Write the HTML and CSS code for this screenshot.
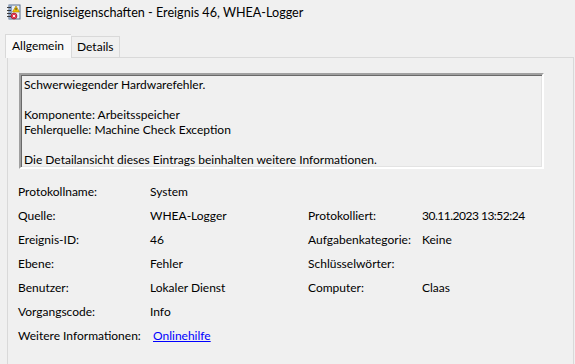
FILE: index.html
```html
<!DOCTYPE html>
<html lang="de">
<head>
  <meta charset="UTF-8" />
  <title>Ereigniseigenschaften</title>
  <link rel="stylesheet" href="styles.css">
</head>
<body>
  <div id="window">
    <div class="titlebar">
      <svg class="app-icon" width="16" height="16" viewBox="0 0 16 16">
        <rect x="3" y="1" width="11" height="14" fill="#e8eef6" stroke="#5a6f8c" />
        <rect x="3" y="1" width="3" height="14" fill="#8aa2c4" />
        <g stroke="#3b3b3b" stroke-width="1">
          <line x1="1" y1="3.5" x2="5" y2="3.5" />
          <line x1="1" y1="6.5" x2="5" y2="6.5" />
          <line x1="1" y1="9.5" x2="5" y2="9.5" />
          <line x1="1" y1="12.5" x2="5" y2="12.5" />
        </g>
        <path d="M10 2 L13.5 8 L6.5 8 Z" fill="#f5c400" stroke="#a07b00" stroke-width="0.6" />
        <rect x="9.6" y="4" width="0.9" height="2.2" fill="#333" />
        <circle cx="8" cy="12" r="3" fill="#e0304a" stroke="#9a1020" stroke-width="0.6" />
        <path d="M6.8 10.8 L9.2 13.2 M9.2 10.8 L6.8 13.2" stroke="#fff" stroke-width="0.9" />
      </svg>
      <span class="title">Ereigniseigenschaften - Ereignis 46, WHEA-Logger</span>
    </div>

    <div class="tabs">
      <div class="tab active">Allgemein</div>
      <div class="tab">Details</div>
    </div>

    <div class="panel">
      <div class="description">
        <div>Schwerwiegender Hardwarefehler.</div>
        <div>&nbsp;</div>
        <div>Komponente: Arbeitsspeicher</div>
        <div>Fehlerquelle: Machine Check Exception</div>
        <div>&nbsp;</div>
        <div>Die Detailansicht dieses Eintrags beinhalten weitere Informationen.</div>
      </div>

      <div class="fields">
        <div>Protokollname:</div><div>System</div><div></div><div></div>
        <div>Quelle:</div><div>WHEA-Logger</div><div>Protokolliert:</div><div class="num">30.11.2023 13:52:24</div>
        <div>Ereignis-ID:</div><div>46</div><div>Aufgabenkategorie:</div><div>Keine</div>
        <div>Ebene:</div><div>Fehler</div><div>Schlüsselwörter:</div><div></div>
        <div>Benutzer:</div><div>Lokaler Dienst</div><div>Computer:</div><div>Claas</div>
        <div>Vorgangscode:</div><div>Info</div><div></div><div></div>
        <div>Weitere Informationen:</div><div><a class="link" href="#">Onlinehilfe</a></div><div></div><div></div>
      </div>
    </div>
  </div>
</body>
</html>
```

FILE: styles.css
```css
html, body {
  margin: 0;
  padding: 0;
  height: 100%;
  background: #f0f0f0;
  color: #000;
  font-family: 'Lato', 'Segoe UI', sans-serif;
  font-size: 12px;
  overflow: hidden;
}

#window {
  display: flex;
  flex-direction: column;
  height: 100vh;
}

.titlebar {
  display: flex;
  align-items: center;
  height: 24px;
  padding-left: 6px;
  flex-shrink: 0;
}

.app-icon {
  flex-shrink: 0;
  margin-right: 3px;
}

.title {
  font-size: 12.6px;
}

.tabs {
  display: flex;
  align-items: flex-end;
  height: 33px;
  padding-left: 5px;
  box-sizing: border-box;
  flex-shrink: 0;
}

.tab {
  border: 1px solid #d9d9d9;
  border-bottom: none;
  background: #f0f0f0;
  padding: 0 5px 0 5px;
  height: 20px;
  line-height: 20px;
}

.tab.active {
  background: #f9f9f9;
  height: 23px;
  line-height: 21px;
  padding: 0 7px 0 6px;
  margin-bottom: -1px;
  position: relative;
  z-index: 1;
  border-right: none;
}

.panel {
  flex: 1;
  margin-left: 7px;
  margin-right: 1px;
  border: 1px solid #d9d9d9;
  border-bottom: none;
  padding: 15px 0 0 10px;
}

.description {
  width: 525px;
  height: 96px;
  box-sizing: border-box;
  border-style: solid;
  border-width: 2px;
  border-color: #a0a0a0 #ffffff #ffffff #a0a0a0;
  box-shadow: inset 1px 1px 0 #696969, inset -1px -1px 0 #e3e3e3;
  padding: 2px 3px;
  line-height: 15px;
  margin-left: 1px;
}

.fields {
  display: grid;
  grid-template-columns: 132px 158px 114px auto;
  grid-auto-rows: 24.1px;
  align-items: center;
  margin-top: 10px;
}

.num {
  letter-spacing: -0.5px;
}

.link {
  color: #0000ff;
  text-decoration: underline;
  margin-left: 3px;
}
```
